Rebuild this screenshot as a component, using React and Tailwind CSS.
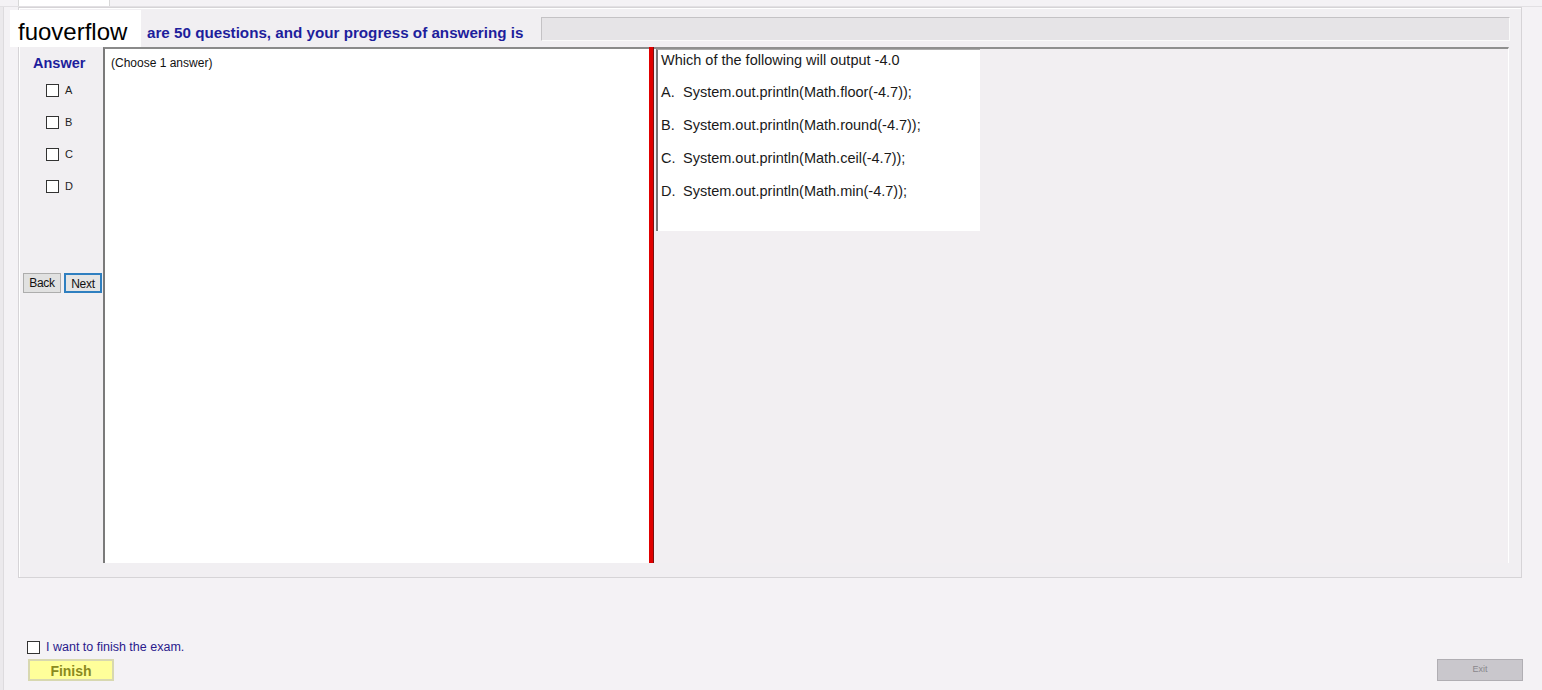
import React from 'react'

const opts = [
  ['A.', 'System.out.println(Math.floor(-4.7));'],
  ['B.', 'System.out.println(Math.round(-4.7));'],
  ['C.', 'System.out.println(Math.ceil(-4.7));'],
  ['D.', 'System.out.println(Math.min(-4.7));'],
]

function Box({ size = 'w-[13px] h-[13px]' }) {
  return <span className={`${size} border border-[#333] bg-white shrink-0`} />
}

export default function App() {
  return (
    <div className="relative w-[1542px] h-[690px] overflow-hidden bg-[#f4f2f5] font-['Liberation_Sans',Arial,sans-serif] text-black">
      {/* top tab strip */}
      <div className="h-[7px] flex border-b border-[#e2e0e3]">
        <div className="w-[18px]" />
        <div className="w-[92px] bg-white border-x border-[#d8d8d8]" />
      </div>

      <div className="flex">
        <div className="w-[4px] h-[690px] bg-[#ebe9ec] border-r border-[#dddbde]" />
        <div className="ml-[14px] w-[1504px] h-[571px] border border-[#d6d4d7] bg-[#f1eff2] p-[4px] shadow-[inset_1px_1px_0_#fff]">
          {/* header (the start of the sentence sits under the watermark) */}
          <div className="flex h-[24px] mt-[5px]">
            <div className="w-[518px] pl-[124px] pt-[7px] text-[15.2px] leading-[18px] font-bold text-[#1e1e9c] whitespace-nowrap">
              are 50 questions, and your progress of answering is
            </div>
            <div className="flex-1 mr-[7px] h-[24px] bg-[#e6e4e7] border border-[#c4c2c5] border-b-[#fafafa] border-r-[#fafafa]" />
          </div>

          {/* content */}
          <div className="flex mt-[6px] h-[516px] mr-[8px]">
            <div className="w-[80px] flex flex-col">
              <div className="pl-[10px] pt-[6px] text-[14.5px] font-bold text-[#1e1e9c]">Answer</div>
              <div className="flex flex-col gap-[19px] pl-[23px] mt-[9px]">
                {['A', 'B', 'C', 'D'].map(l => (
                  <label key={l} className="flex items-center gap-[6px] h-[13px] text-[11px] text-[#222]">
                    <Box /> {l}
                  </label>
                ))}
              </div>
              <div className="flex gap-[3px] mt-[80px]">
                <button className="w-[38px] h-[20px] bg-[#e1e1e1] border border-[#adadad] text-[12px] text-[#111] tracking-[-0.3px]">Back</button>
                <button className="w-[38px] h-[20px] bg-[#e5e5e5] border-2 border-[#2f7fc0] text-[12px] text-[#111] tracking-[-0.3px]">Next</button>
              </div>
            </div>

            <div className="w-[546px] bg-white border-l-2 border-t-2 border-[#8a8a8a] border-l-[#7a7a7a] pl-[6px] pt-[5px] text-[12px] text-[#111]">
              (Choose 1 answer)
            </div>

            <div className="w-[5px] bg-[#e00000] border-r border-[#7a1010]" />

            <div className="flex-1 bg-[#f2eff2] border-t-2 border-[#8f8f8f] border-r border-r-[#fff] pl-[2px]">
              <div className="w-[324px] h-[182px] bg-white border-l-2 border-[#777] border-t border-t-[#aaa] pl-[3px] pt-[2px] text-[14.5px] text-[#1a1a1a]">
                <div className="h-[17px] leading-[17px]">Which of the following will output -4.0</div>
                <div className="flex flex-col gap-[16px] mt-[15px]">
                  {opts.map(([k, v]) => (
                    <div key={k} className="flex h-[17px] leading-[17px]">
                      <span className="w-[22px]">{k}</span>
                      <span>{v}</span>
                    </div>
                  ))}
                </div>
              </div>
            </div>
          </div>
        </div>
      </div>

      {/* footer */}
      <div className="absolute left-0 top-[640px] w-full">
        <div className="flex items-center gap-[6px] pl-[27px] h-[15px]">
          <Box />
          <span className="text-[12.5px] text-[#2a1a8c]">I want to finish the exam.</span>
        </div>
        <div className="flex justify-between items-center mt-[4px] pl-[28px] pr-[19px]">
          <button className="w-[86px] h-[22px] bg-[#ffff9a] border-2 border-[#d8d8b0] text-[14px] font-bold text-[#8a8a20]">Finish</button>
          <button className="w-[86px] h-[22px] bg-[#c9c7cc] border border-[#b0aeb3] text-[9px] text-[#8a888d]">Exit</button>
        </div>
      </div>

      {/* watermark overlay */}
      <div className="absolute left-[10px] top-[10px] w-[131px] h-[37px] bg-white flex items-center pl-[8px] pt-[6px] text-[24px] text-black">
        fuoverflow
      </div>
    </div>
  )
}
